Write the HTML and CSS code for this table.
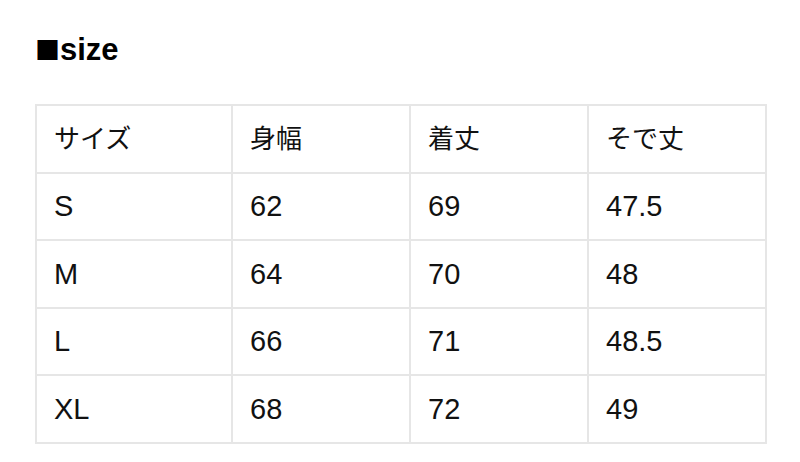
FILE: index.html
```html
<!DOCTYPE html>
<html lang="ja">
<head>
<meta charset="utf-8">
<link rel="stylesheet" href="styles.css">
</head>
<body>
<div class="page">
  <h2 class="title"><span class="mark">■</span>size</h2>
  <table class="size-table">
    <colgroup>
      <col class="c1"><col class="c2"><col class="c2"><col class="c2">
    </colgroup>
    <tr class="head"><td>サイズ</td><td>身幅</td><td>着丈</td><td>そで丈</td></tr>
    <tr><td>S</td><td>62</td><td>69</td><td>47.5</td></tr>
    <tr><td>M</td><td>64</td><td>70</td><td>48</td></tr>
    <tr><td>L</td><td>66</td><td>71</td><td>48.5</td></tr>
    <tr><td>XL</td><td>68</td><td>72</td><td>49</td></tr>
  </table>
</div>
</body>
</html>
```
FILE: styles.css
```css
html, body {
  margin: 0;
  padding: 0;
  background: #fff;
}
.page {
  padding: 31px 0 0 35px;
  font-family: "Liberation Sans", "Noto Sans CJK JP", sans-serif;
  color: #111;
}
.title {
  margin: 0 0 36px 0;
  font-size: 31px;
  font-weight: bold;
  line-height: 36px;
  display: flex;
  align-items: baseline;
  color: #000;
}
.title .mark {
  font-family: "Noto Sans CJK JP", sans-serif;
  font-size: 25px;
  margin-right: 0;
}
.size-table {
  border-collapse: collapse;
  width: 730px;
  table-layout: fixed;
}
.size-table col.c1 { width: 196px; }
.size-table col.c2 { width: 178px; }
.size-table td {
  border: 2px solid #e6e6e6;
  height: 65.5px;
  padding: 0 0 0 17px;
  font-size: 29px;
  line-height: 32px;
  vertical-align: middle;
}
.size-table .head td {
  font-size: 26px;
}
```
